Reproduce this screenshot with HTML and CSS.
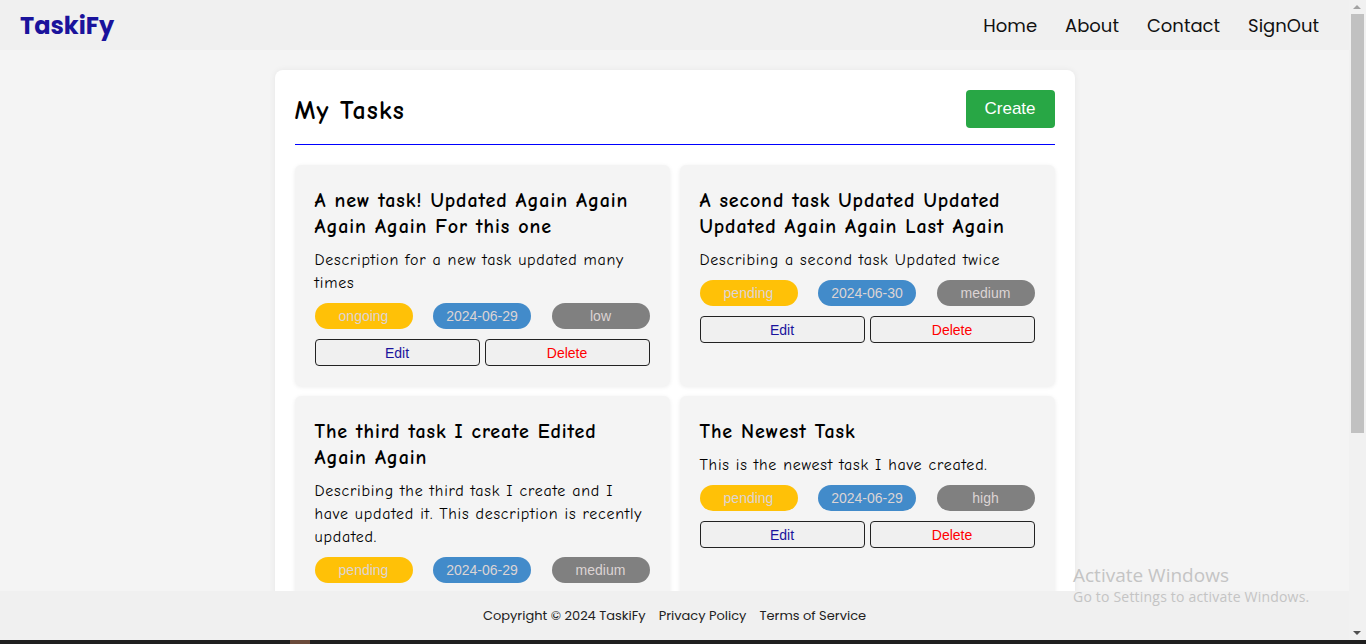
FILE: index.html
```html
<!DOCTYPE html>
<html lang="en">
<head>
<meta charset="utf-8">
<title>TaskiFy</title>
<link rel="stylesheet" href="styles.css">
</head>
<body>
<div class="screen">
  <div class="window">
    <div class="app">
      <header class="topbar">
        <a class="logo" href="#">TaskiFy</a>
        <nav class="nav">
          <a href="#">Home</a>
          <a href="#">About</a>
          <a href="#">Contact</a>
          <a href="#">SignOut</a>
        </nav>
      </header>
      <main class="viewport">
        <section class="panel">
          <div class="panel-head">
            <h1>My Tasks</h1>
            <button class="btn-create">Create</button>
          </div>
          <div class="grid">
            <article class="card">
              <h3>A new task! Updated Again Again Again Again For this one</h3>
              <p>Description for a new task updated many times</p>
              <div class="badges">
                <span class="badge status">ongoing</span>
                <span class="badge date">2024-06-29</span>
                <span class="badge prio">low</span>
              </div>
              <div class="actions">
                <button class="btn edit">Edit</button>
                <button class="btn del">Delete</button>
              </div>
            </article>
            <article class="card">
              <h3>A second task Updated Updated Updated Again Again Last Again</h3>
              <p>Describing a second task Updated twice</p>
              <div class="badges">
                <span class="badge status">pending</span>
                <span class="badge date">2024-06-30</span>
                <span class="badge prio">medium</span>
              </div>
              <div class="actions">
                <button class="btn edit">Edit</button>
                <button class="btn del">Delete</button>
              </div>
            </article>
            <article class="card">
              <h3>The third task I create Edited Again Again</h3>
              <p>Describing the third task I create and I have updated it. This description is recently updated.</p>
              <div class="badges">
                <span class="badge status">pending</span>
                <span class="badge date">2024-06-29</span>
                <span class="badge prio">medium</span>
              </div>
              <div class="actions">
                <button class="btn edit">Edit</button>
                <button class="btn del">Delete</button>
              </div>
            </article>
            <article class="card">
              <h3>The Newest Task</h3>
              <p>This is the newest task I have created.</p>
              <div class="badges">
                <span class="badge status">pending</span>
                <span class="badge date">2024-06-29</span>
                <span class="badge prio">high</span>
              </div>
              <div class="actions">
                <button class="btn edit">Edit</button>
                <button class="btn del">Delete</button>
              </div>
            </article>
          </div>
        </section>
      </main>
      <footer class="footer">
        <span>Copyright © 2024 TaskiFy</span>
        <a href="#">Privacy Policy</a>
        <a href="#">Terms of Service</a>
      </footer>
    </div>
    <div class="scrollbar">
      <div class="arrow up"></div>
      <div class="thumb"></div>
      <div class="track-rest"></div>
      <div class="arrow down"></div>
    </div>
  </div>
  <div class="taskbar">
    <div class="tb-a"></div>
    <div class="tb-b"></div>
    <div class="tb-c"></div>
  </div>
  <div class="watermark">
    <div class="wm-title">Activate Windows</div>
    <div class="wm-sub">Go to Settings to activate Windows.</div>
  </div>
</div>
</body>
</html>
```
FILE: styles.css
```css
* { box-sizing: border-box; }
html, body { margin: 0; padding: 0; height: 100%; overflow: hidden; }
body { background: #f4f4f4; font-family: "Poppins", "Inter", "Lato", sans-serif; }

.screen { position: relative; display: flex; flex-direction: column; height: 644px; }
.window { display: flex; flex: 1; min-height: 0; }
.app { flex: 1; display: flex; flex-direction: column; min-width: 0; }

.topbar {
  height: 50px; background: #f0f0f0;
  display: flex; align-items: center; justify-content: space-between;
  padding: 0 30px 0 20px;
}
.logo { font-weight: 700; font-size: 24px; color: #1a139c; text-decoration: none; }
.nav { display: flex; gap: 28px; }
.nav a { color: #111; text-decoration: none; font-size: 18px; }

.viewport { flex: 1; overflow: hidden; padding-top: 20px; min-height: 0; }
.panel {
  width: 800px; margin: 0 auto; background: #fff; border-radius: 8px;
  padding: 20px; box-shadow: 0 0 6px rgba(0,0,0,0.06);
}
.panel-head {
  display: flex; justify-content: space-between; align-items: center;
  padding-bottom: 16px; border-bottom: 1px solid #0000ff;
}
.panel-head h1 {
  margin: 4px 0 0; font-family: "Comic Sans MS", "Comic Neue", "DejaVu Sans", sans-serif;
  font-size: 26px; letter-spacing: 1.1px; font-weight: 700; color: #000;
}
.btn-create {
  height: 38px; width: 89px; border: 0; border-radius: 4px; background: #28a745;
  color: #fff; font-family: "Liberation Sans", Arial, sans-serif; font-size: 17px;
}

.grid { display: grid; grid-template-columns: 1fr 1fr; gap: 10px; margin-top: 20px; }
.card {
  background: #f4f4f4; border-radius: 6px; padding: 20px;
  box-shadow: 0 1px 4px rgba(0,0,0,0.08);
  font-family: "Comic Sans MS", "Comic Neue", "DejaVu Sans", sans-serif;
}
.card h3 { margin: 0; font-size: 20px; letter-spacing: 0.9px; line-height: 26px; font-weight: 700; color: #000; padding-top: 3px; }
.card p { margin: 9px 0 0; font-size: 16px; letter-spacing: 0.75px; line-height: 23px; color: #000; }

.badges { display: flex; justify-content: space-between; margin-top: 8px; }
.badge {
  width: 98px; height: 26px; border-radius: 13px; display: flex; align-items: center; justify-content: center;
  font-family: "Liberation Sans", Arial, sans-serif; font-size: 14px; color: #dcd4d4;
}
.badge.status { background: #ffc107; }
.badge.date { background: #428bca; }
.badge.prio { background: #808080; }

.actions { display: flex; gap: 5px; margin-top: 10px; }
.btn {
  flex: 1; height: 27px; background: #f0f0f0; border: 1px solid #222; border-radius: 4px;
  font-family: "Liberation Sans", Arial, sans-serif; font-size: 14px;
}
.btn.edit { color: #1a139c; }
.btn.del { color: #ff0000; }

.footer {
  height: 49px; background: #f0f0f0; display: flex; justify-content: center; align-items: center;
  gap: 13px; font-size: 13px; color: #222;
}
.footer a { color: #222; text-decoration: none; }

.scrollbar { width: 17px; background: #f1f1f1; display: flex; flex-direction: column; align-items: center; }
.arrow { width: 17px; height: 14px; position: relative; }
.arrow.up::after, .arrow.down::after {
  content: ""; position: absolute; left: 4px; border-left: 4px solid transparent; border-right: 4px solid transparent;
}
.arrow.up::after { top: 5px; border-bottom: 4px solid #a3a3a3; }
.arrow.down::after { top: 5px; border-top: 4px solid #505050; }
.thumb { width: 13px; height: 419px; background: #c1c1c1; }
.track-rest { flex: 1; }

.taskbar { height: 4px; background: #1f1f1f; display: flex; }
.tb-a { width: 290px; }
.tb-b { width: 20px; background: #6b4a3a; }
.tb-c { flex: 1; }

.watermark {
  position: absolute; left: 1073px; top: 563px; color: #c4c4c4;
  font-family: "Open Sans", "Noto Sans", sans-serif;
}
.wm-title { font-size: 19px; line-height: 24px; }
.wm-sub { font-size: 14px; line-height: 20px; letter-spacing: 0.2px; }
```
